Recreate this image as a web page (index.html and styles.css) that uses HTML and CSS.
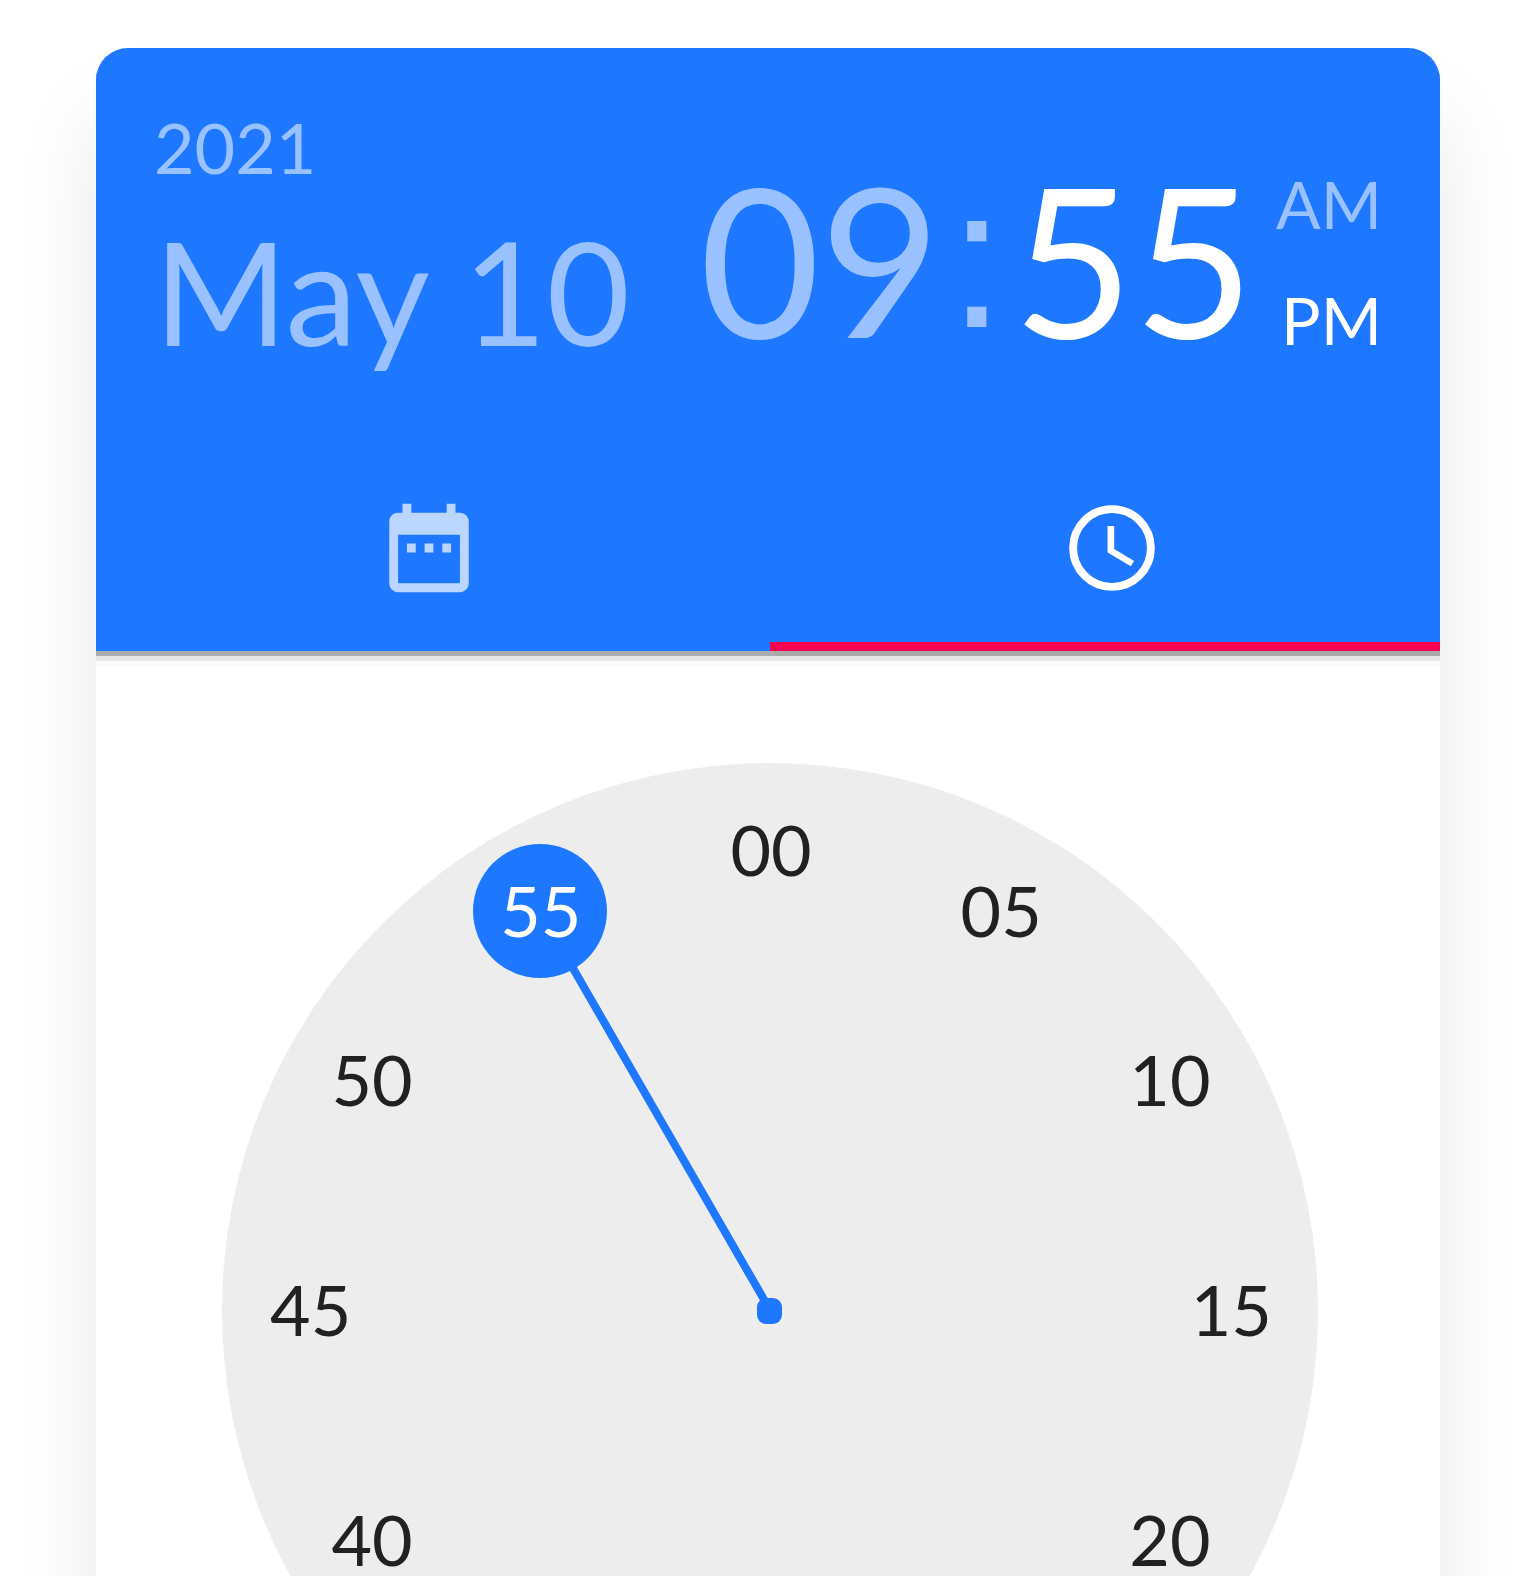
FILE: index.html
```html
<!DOCTYPE html>
<html lang="en">
<head>
<meta charset="utf-8">
<meta name="viewport" content="width=device-width, initial-scale=1">
<title>Date and time picker</title>
<link rel="stylesheet" href="styles.css">
</head>
<body>
<main class="page">
  <section class="picker" aria-label="Date and time picker">
    <header class="picker-header">
      <div class="toolbar">
        <div class="date">
          <button type="button" class="year">2021</button>
          <button type="button" class="day">May 10</button>
        </div>
        <div class="clock-value">
          <div class="time">
            <button type="button">09</button><span class="colon">:</span><button type="button" class="active">55</button>
          </div>
          <div class="meridiem">
            <button type="button">AM</button>
            <button type="button" class="active">PM</button>
          </div>
        </div>
      </div>
      <div class="tabs" role="tablist">
        <button type="button" class="tab" role="tab" aria-selected="false" aria-label="Date">
          <svg class="icon" viewBox="0 0 24 24" aria-hidden="true"><path d="M9 11H7v2h2v-2zm4 0h-2v2h2v-2zm4 0h-2v2h2v-2zm2-7h-1V2h-2v2H8V2H6v2H5c-1.11 0-1.99.9-1.99 2L3 20c0 1.1.89 2 2 2h14c1.1 0 2-.9 2-2V6c0-1.1-.9-2-2-2zm0 16H5V9h14v11z"/></svg>
        </button>
        <button type="button" class="tab selected" role="tab" aria-selected="true" aria-label="Time">
          <svg class="icon" viewBox="0 0 24 24" aria-hidden="true"><circle class="ring" cx="12" cy="12" r="8.8"/><path d="M12.5 7H11v6l5.25 3.15.75-1.23-4.5-2.67z"/></svg>
        </button>
      </div>
    </header>
    <div class="picker-body">
      <div class="dial">
        <svg class="hand" viewBox="0 0 1096 1096" aria-hidden="true">
          <path class="hand-line" d="M548 547L318 148"/>
          <circle cx="318" cy="148" r="67"/>
          <rect x="535" y="535" width="25" height="26" rx="9"/>
        </svg>
        <button type="button" class="minute m00">00</button>
        <button type="button" class="minute m05">05</button>
        <button type="button" class="minute m10">10</button>
        <button type="button" class="minute m15">15</button>
        <button type="button" class="minute m20">20</button>
        <button type="button" class="minute m40">40</button>
        <button type="button" class="minute m45">45</button>
        <button type="button" class="minute m50">50</button>
        <button type="button" class="minute m55 active">55</button>
      </div>
    </div>
  </section>
</main>
</body>
</html>
```
FILE: styles.css
```css
* {
  box-sizing: border-box;
}

body {
  margin: 0;
  background: #fff;
  font-family: Lato, "Liberation Sans", sans-serif;
}

button {
  margin: 0;
  padding: 0;
  border: 0;
  background: none;
  color: inherit;
  font: inherit;
  cursor: pointer;
}

.page {
  height: 100vh;
  padding: 48px 96px 0;
  overflow: hidden;
}

.picker {
  border-radius: 32px;
  background: #fff;
  overflow: hidden;
  box-shadow: 0 64px 88px rgba(0, 0, 0, 0.09);
}

.picker-header {
  padding-top: 48px;
  background: #1e77ff;
  color: #99c1ff;
  box-shadow: 0 5px 0 #acacac, 0 10px 0 #e7e7e7, 0 15px 0 #fbfbfb;
}

.toolbar {
  display: flex;
  justify-content: space-between;
  align-items: flex-start;
  padding: 0 58px 60px;
}

.date {
  display: flex;
  flex-direction: column;
  align-items: flex-start;
}

.year {
  font-size: 70px;
  line-height: 102px;
}

.day {
  font-size: 144px;
  line-height: 186px;
  white-space: nowrap;
}

.clock-value {
  display: flex;
  gap: 22px;
}

.time {
  display: flex;
  padding-top: 42px;
  font-size: 208px;
  line-height: 240px;
}

.colon {
  width: 72px;
  font-family: "Liberation Sans", sans-serif;
  font-size: 200px;
  text-align: center;
}

.meridiem {
  display: flex;
  flex-direction: column;
  align-items: flex-end;
  gap: 12px;
  padding-top: 56px;
  font-size: 66px;
  line-height: 104px;
}

.active {
  color: #fff;
}

.tabs {
  display: flex;
  margin: 0 -13px 0 -9px;
}

.tab {
  display: flex;
  flex: 1;
  align-items: center;
  justify-content: center;
  height: 207px;
  color: #bad6ff;
}

.tab.selected {
  color: #fff;
  box-shadow: inset 0 -9px 0 #f50050;
}

.icon {
  width: 106px;
  height: 106px;
  fill: currentColor;
}

.ring {
  fill: none;
  stroke: currentColor;
  stroke-width: 1.8;
}

.picker-body {
  padding: 112px 122px 112px 126px;
}

.dial {
  position: relative;
  aspect-ratio: 1;
  border-radius: 50%;
  background: #ededed;
}

.hand {
  display: block;
  width: 100%;
  fill: #1e77ff;
}

.hand-line {
  stroke: #1e77ff;
  stroke-width: 8;
}

.minute {
  position: absolute;
  width: 134px;
  height: 64px;
  margin: -34px 0 0 -66px;
  color: #212121;
  font-size: 70px;
  line-height: 64px;
}

.minute.active {
  color: #fff;
}

.m00 { left: 50%; top: 8%; }
.m05 { left: 71%; top: 13.6%; }
.m10 { left: 86.4%; top: 29%; }
.m15 { left: 92%; top: 50%; }
.m20 { left: 86.4%; top: 71%; }
.m40 { left: 13.6%; top: 71%; }
.m45 { left: 8%; top: 50%; }
.m50 { left: 13.6%; top: 29%; }
.m55 { left: 29%; top: 13.6%; }
```
